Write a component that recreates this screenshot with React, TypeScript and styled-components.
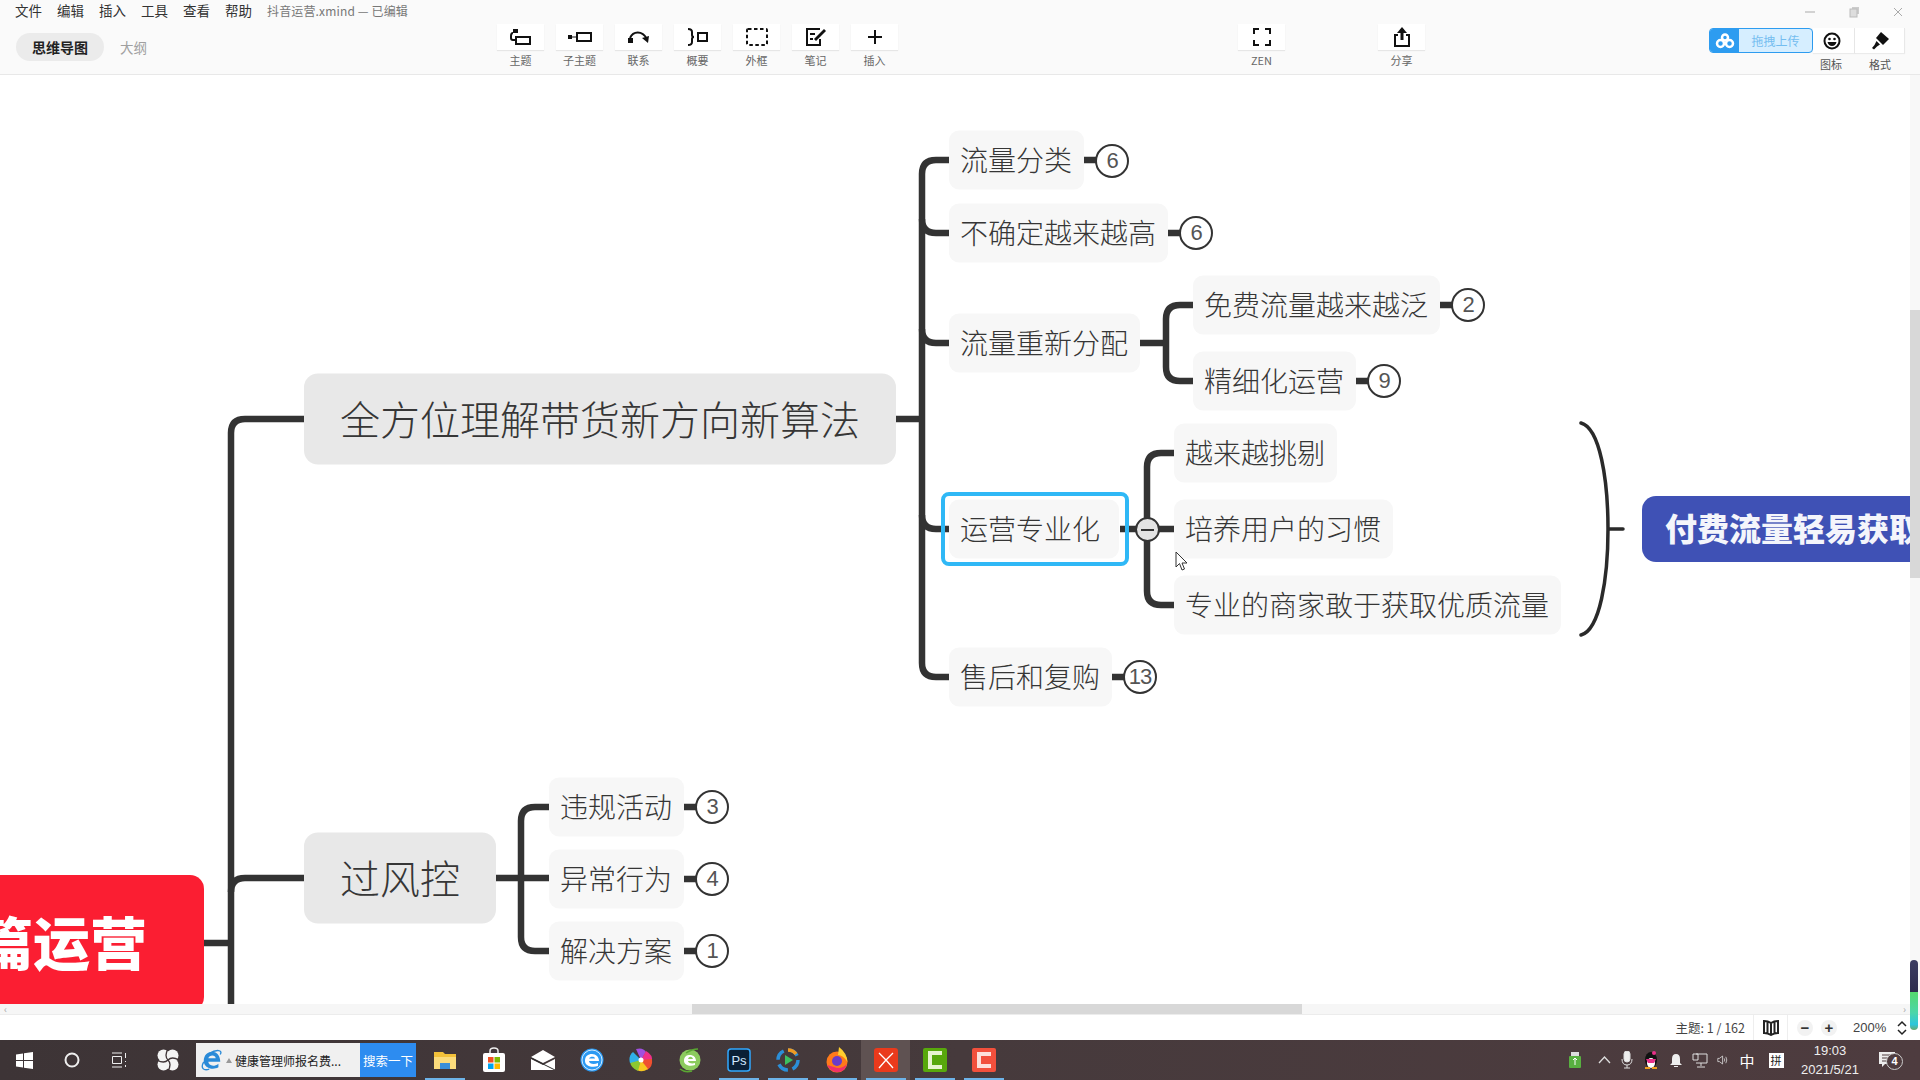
import React from "react";
import styled, { createGlobalStyle } from "styled-components";

const GlobalStyle = createGlobalStyle`
    html, body {
        margin: 0;
        padding: 0;
        background: #fff;
        overflow: hidden;
        font-family: "Noto Sans CJK SC", "Liberation Sans", sans-serif;
    }
    * {
        box-sizing: border-box;
    }
`;

const Page = styled.div`
    width: 1920px;
    height: 1080px;
    display: flex;
    flex-direction: column;
    overflow: hidden;
`;

/* top bar */
const TopBar = styled.header`
    height: 75px;
    flex: none;
    display: flex;
    background: #fafafa;
    border-bottom: 1px solid #e8e8e8;
`;

const LeftPane = styled.div`
    width: 497px;
    flex: none;
    display: flex;
    flex-direction: column;
`;

const MenuRow = styled.div`
    height: 20px;
    padding-left: 15px;
    display: flex;
    align-items: center;
    gap: 15px;
`;

const MenuItem = styled.span`
    font-size: 13.5px;
    color: #333;
    line-height: 20px;
`;

const FileTitle = styled.span`
    font-size: 12px;
    color: #777;
    letter-spacing: 0.15px;
    white-space: nowrap;
`;

const TabRow = styled.div`
    margin-top: 13px;
    padding-left: 16px;
    display: flex;
    align-items: center;
`;

const ActiveTab = styled.div`
    width: 88px;
    height: 28px;
    border-radius: 14px;
    background: #ebebeb;
    color: #222;
    font-size: 14px;
    font-weight: 700;
    display: flex;
    align-items: center;
    justify-content: center;
`;

const Tab = styled.div`
    margin-left: 16px;
    font-size: 13.5px;
    color: #a0a0a0;
`;

const Tools = styled.div`
    display: flex;
    gap: 12px;
    padding-top: 24px;
`;

const ToolWrap = styled.div`
    width: 47px;
    display: flex;
    flex-direction: column;
    align-items: center;
`;

const ToolButton = styled.div`
    width: 47px;
    height: 26px;
    background: #fff;
    box-shadow: 0 1px 1px rgba(0, 0, 0, 0.08);
    display: flex;
    align-items: center;
    justify-content: center;
`;

const ToolLabel = styled.span`
    margin-top: 3px;
    font-size: 11px;
    line-height: 14px;
    color: #666;
    white-space: nowrap;
`;

const ZenSlot = styled.div<{ $gap: number }>`
    margin-left: ${(p) => p.$gap}px;
    padding-top: 24px;
`;

const RightPane = styled.div`
    margin-left: auto;
    width: 211px;
    display: flex;
    flex-direction: column;
`;

const WindowRow = styled.div`
    height: 28px;
    padding: 4px 17px 0 96px;
    display: flex;
    justify-content: space-between;
    align-items: flex-start;
`;

const FormatRow = styled.div`
    display: flex;
    height: 25px;
`;

const Upload = styled.div`
    width: 104px;
    height: 25px;
    display: flex;
    border: 1px solid #2d9cf0;
    border-radius: 4px;
    overflow: hidden;
    background: #d6eeff;
`;

const UploadIcon = styled.div`
    width: 29px;
    background: #2d9cf0;
    display: flex;
    align-items: center;
    justify-content: center;
`;

const UploadText = styled.div`
    flex: 1;
    font-size: 12px;
    color: #74bdf0;
    display: flex;
    align-items: center;
    justify-content: center;
`;

const FormatButton = styled.div<{ $w: number; $shift?: number }>`
    width: ${(p) => p.$w}px;
    padding-right: ${(p) => p.$shift ?? 0}px;
    background: #fff;
    border-right: 1px solid #e8e8e8;
    box-shadow: 0 1px 1px rgba(0, 0, 0, 0.06);
    display: flex;
    align-items: center;
    justify-content: center;
`;

const FormatLabels = styled.div`
    display: flex;
    padding-left: 104px;
    margin-top: 4px;
`;

const FormatLabel = styled.span<{ $w: number }>`
    width: ${(p) => p.$w}px;
    text-align: center;
    font-size: 11px;
    line-height: 14px;
    color: #555;
`;

/* canvas */
const Middle = styled.div`
    flex: 1;
    min-height: 0;
    display: flex;
`;

const Canvas = styled.main`
    position: relative;
    flex: 1;
    overflow: hidden;
    background: #fff;
`;

const Lines = styled.svg`
    position: absolute;
    left: 0;
    top: 0;
`;

const Node = styled.div<{ $x: number; $y: number; $kind: "leaf" | "topic"; $extra?: number }>`
    position: absolute;
    left: ${(p) => p.$x}px;
    top: ${(p) => p.$y}px;
    transform: translateY(-50%);
    height: ${(p) => (p.$kind === "topic" ? 91 : 59)}px;
    padding: 0 ${(p) => (p.$kind === "topic" ? 36 : 12 + (p.$extra ?? 0))}px 4px
        ${(p) => (p.$kind === "topic" ? 36 : 11)}px;
    display: flex;
    align-items: center;
    white-space: nowrap;
    color: #363636;
    font-size: ${(p) => (p.$kind === "topic" ? 40 : 28)}px;
    font-weight: 300;
    background: ${(p) => (p.$kind === "topic" ? "#e8e8e8" : "#f7f7f7")};
    border-radius: ${(p) => (p.$kind === "topic" ? 14 : 10)}px;
`;

const Selection = styled.div`
    position: absolute;
    left: 941px;
    top: 417px;
    width: 188px;
    height: 74px;
    border: 4px solid #2fb8f6;
    border-radius: 8px;
`;

const Badge = styled.div<{ $x: number; $y: number }>`
    position: absolute;
    left: ${(p) => p.$x - 17}px;
    top: ${(p) => p.$y - 17}px;
    width: 34px;
    height: 34px;
    border: 2px solid #333;
    border-radius: 50%;
    background: #fff;
    display: flex;
    align-items: center;
    justify-content: center;
    color: #555;
    font-family: "Liberation Sans", sans-serif;
    font-size: 22px;
    letter-spacing: -1px;
`;

const Collapse = styled.div`
    position: absolute;
    left: 1135px;
    top: 442px;
    width: 25px;
    height: 25px;
    border: 2px solid #333;
    border-radius: 50%;
    background: #e3e3e3;
    display: flex;
    align-items: center;
    justify-content: center;
    &::after {
        content: "";
        width: 13px;
        height: 2px;
        background: #333;
    }
`;

const RootNode = styled.div`
    position: absolute;
    left: -40px;
    top: 800px;
    width: 244px;
    height: 136px;
    background: #fb1e32;
    border-radius: 14px;
    color: #fff;
    font-size: 57px;
    font-weight: 900;
    display: flex;
    align-items: center;
    justify-content: flex-end;
    padding: 0 57px 6px 0;
    white-space: nowrap;
`;

const SummaryNode = styled.div`
    position: absolute;
    left: 1642px;
    top: 421px;
    width: 420px;
    height: 66px;
    background: #3f51b5;
    border-radius: 14px;
    color: #f4f5fb;
    font-size: 32px;
    font-weight: 900;
    display: flex;
    align-items: center;
    padding: 0 0 5px 23px;
    white-space: nowrap;
`;

const Cursor = styled.svg`
    position: absolute;
    left: 1175px;
    top: 476px;
`;

const VScroll = styled.div`
    width: 10px;
    flex: none;
    background: #f8f8f8;
    padding-top: 235px;
`;

const VThumb = styled.div`
    height: 268px;
    background: #d8d8d8;
`;

const HScroll = styled.div`
    height: 11px;
    flex: none;
    background: #f6f6f6;
    border-bottom: 1px solid #ececec;
    display: flex;
    align-items: stretch;
    position: relative;
`;

const HArrow = styled.span<{ $right?: boolean }>`
    position: absolute;
    top: 0;
    ${(p) => (p.$right ? "right: 14px;" : "left: 4px;")}
    font-size: 10px;
    line-height: 10px;
    color: #aaa;
`;

const HThumb = styled.div`
    margin-left: 692px;
    width: 610px;
    background: #d8d8d8;
`;

const Meter = styled.div`
    position: absolute;
    left: 1910px;
    top: 960px;
    width: 8px;
    height: 70px;
    border-radius: 4px;
    background: linear-gradient(
        #3d3d63 0,
        #2e2c4e 45%,
        #55d86e 46%,
        #4bd6a8 75%,
        #2cc6dc 92%,
        #6aa96a 100%
    );
`;

/* status bar */
const StatusBar = styled.div`
    height: 25px;
    flex: none;
    display: flex;
    justify-content: flex-end;
    align-items: stretch;
    background: #fff;
`;

const TopicCount = styled.div`
    font-size: 12.5px;
    color: #444;
    padding-right: 8px;
    display: flex;
    align-items: center;
`;

const BookSlot = styled.div`
    width: 35px;
    border-left: 1px solid #eee;
    border-right: 1px solid #eee;
    display: flex;
    align-items: center;
    justify-content: center;
`;

const ZoomGroup = styled.div`
    width: 132px;
    padding: 0 11px 0 9px;
    display: flex;
    align-items: center;
`;

const ZoomButton = styled.div`
    width: 16px;
    height: 16px;
    border-radius: 50%;
    background: #f2f2f2;
    color: #333;
    font-family: "Liberation Sans", sans-serif;
    font-weight: 700;
    font-size: 15px;
    line-height: 15px;
    text-align: center;
    margin-right: 8px;
`;

const ZoomValue = styled.span`
    margin-left: 8px;
    width: 44px;
    font-family: "Liberation Sans", sans-serif;
    font-size: 13px;
    color: #444;
`;

/* taskbar */
const Taskbar = styled.footer`
    height: 40px;
    flex: none;
    display: flex;
    align-items: stretch;
    background: linear-gradient(90deg, #3d3436 0%, #463a3c 50%, #4e3c3f 100%);
`;

const StartSlot = styled.div`
    width: 48px;
    display: flex;
    align-items: center;
    justify-content: center;
`;

const SearchBox = styled.div`
    width: 220px;
    margin: 3px 4px 3px 4px;
    display: flex;
    background: #f0f0f0;
`;

const SearchText = styled.div`
    flex: 1;
    display: flex;
    align-items: center;
    padding-left: 5px;
    gap: 3px;
    font-size: 12px;
    color: #222;
    white-space: nowrap;
`;

const SearchButton = styled.div`
    width: 56px;
    background: #2d8cf0;
    color: #fff;
    font-size: 12.5px;
    display: flex;
    align-items: center;
    justify-content: center;
`;

const AppSlot = styled.div<{ $open?: boolean; $active?: boolean }>`
    position: relative;
    width: 49px;
    display: flex;
    align-items: center;
    justify-content: center;
    background: ${(p) => (p.$active ? "#5f5252" : "transparent")};
    &::after {
        content: "";
        display: ${(p) => (p.$open ? "block" : "none")};
        position: absolute;
        left: 5px;
        right: 4px;
        bottom: 0;
        height: 2px;
        background: #6db3e8;
    }
`;

const Tray = styled.div`
    margin-left: auto;
    padding-right: 19px;
    display: flex;
    align-items: stretch;
`;

const TraySlot = styled.div<{ $w: number }>`
    width: ${(p) => p.$w}px;
    display: flex;
    align-items: center;
    justify-content: center;
    color: #fff;
    font-size: 15px;
    position: relative;
`;

const Clock = styled.div`
    display: flex;
    flex-direction: column;
    align-items: center;
    color: #eee;
    font-family: "Liberation Sans", sans-serif;
    font-size: 13px;
    line-height: 19px;
`;

const Ime = styled.div`
    width: 15px;
    height: 15px;
    background: #fff;
    color: #222;
    font-size: 11px;
    line-height: 15px;
    text-align: center;
`;

const NotifyCount = styled.span`
    position: absolute;
    left: 13px;
    top: 13px;
    width: 17px;
    height: 17px;
    border-radius: 50%;
    border: 1px solid #ccc;
    background: #4e3c3f;
    color: #fff;
    font-family: "Liberation Sans", sans-serif;
    font-weight: 700;
    font-size: 11px;
    line-height: 15px;
    text-align: center;
`;

const black = { fill: "none", stroke: "#111", strokeWidth: 2 };

const toolIcons: Record<string, React.ReactNode> = {
    主题: (
        <svg width="22" height="18" viewBox="0 0 22 18" {...black}>
            <rect x="3" y="1" width="5" height="4" fill="#111" stroke="none" />
            <path d="M3 5Q1 5 1 8V10Q1 12 3 12H5" />
            <rect x="6" y="9" width="14" height="7" />
        </svg>
    ),
    子主题: (
        <svg width="26" height="12" viewBox="0 0 26 12" {...black}>
            <rect x="1" y="4" width="4" height="4" fill="#111" stroke="none" />
            <path d="M5 6H9" strokeWidth="1" />
            <rect x="10" y="2" width="14" height="8" />
        </svg>
    ),
    联系: (
        <svg width="24" height="14" viewBox="0 0 24 14" {...black}>
            <rect x="1" y="8" width="5" height="5" fill="#111" stroke="none" />
            <path d="M3 8C6 1 15 0 20 9" />
            <path d="M15 8L22 6L21 13Z" fill="#111" stroke="none" />
        </svg>
    ),
    概要: (
        <svg width="22" height="18" viewBox="0 0 22 18" {...black}>
            <path d="M1 1Q5 1 5 4V7Q5 9 7 9Q5 9 5 11V14Q5 17 1 17" />
            <rect x="11" y="5" width="9" height="8" />
        </svg>
    ),
    外框: (
        <svg width="22" height="20" viewBox="0 0 22 20" {...black}>
            <rect x="1" y="2" width="20" height="16" rx="1" strokeDasharray="3.5 2.5" />
        </svg>
    ),
    笔记: (
        <svg width="22" height="20" viewBox="0 0 22 20" {...black}>
            <path d="M15 2H2V18H15V12" />
            <path d="M5 7H10M5 12H8" />
            <path d="M9 12L19 2L21 4L11 14Z" fill="#111" stroke="none" />
        </svg>
    ),
    插入: (
        <svg width="16" height="16" viewBox="0 0 16 16" {...black}>
            <path d="M8 1V15M1 8H15" />
        </svg>
    ),
};

const leaves = [
    { text: "流量分类", x: 949, y: 160 },
    { text: "不确定越来越高", x: 949, y: 233 },
    { text: "流量重新分配", x: 949, y: 343 },
    { text: "运营专业化", x: 949, y: 529, extra: 7 },
    { text: "售后和复购", x: 949, y: 677 },
    { text: "免费流量越来越泛", x: 1193, y: 305 },
    { text: "精细化运营", x: 1193, y: 381 },
    { text: "越来越挑剔", x: 1174, y: 453 },
    { text: "培养用户的习惯", x: 1174, y: 529 },
    { text: "专业的商家敢于获取优质流量", x: 1174, y: 605 },
    { text: "违规活动", x: 549, y: 807 },
    { text: "异常行为", x: 549, y: 879 },
    { text: "解决方案", x: 549, y: 951 },
];

const badges = [
    { n: 6, x: 1112, y: 161 },
    { n: 6, x: 1196, y: 233 },
    { n: 2, x: 1468, y: 305 },
    { n: 9, x: 1384, y: 381 },
    { n: 13, x: 1140, y: 677 },
    { n: 3, x: 712, y: 807 },
    { n: 4, x: 712, y: 879 },
    { n: 1, x: 712, y: 951 },
];

const branchPaths = [
    "M204 943H231",
    "M304 419H245Q231 419 231 433V1010",
    "M304 878H245Q231 878 231 892",
    "M896 419H922",
    "M949 160H936Q922 160 922 174V663Q922 677 936 677H949",
    "M922 219Q922 233 936 233H949",
    "M922 329Q922 343 936 343H949",
    "M922 515Q922 529 936 529H949",
    "M1084 160H1098M1167 233H1182M1439 305H1454M1355 381H1370M1111 677H1126",
    "M1140 343H1166",
    "M1193 305H1180Q1166 305 1166 319V367Q1166 381 1180 381H1193",
    "M1120 529H1174",
    "M1174 453H1161Q1147 453 1147 467V591Q1147 605 1161 605H1174",
    "M496 878H549",
    "M549 807H535Q521 807 521 821V937Q521 951 535 951H549",
    "M683 807H697M683 879H697M683 951H697",
];

const IeLogo = ({ size, color }: { size: number; color: string }) => (
    <svg width={size} height={size} viewBox="0 0 24 24">
        <path
            d="M3 13C3 7 7 3 12 3C18 3 21 8 21 14H8C8 18 14 20 19 16V20C12 24 3 20 3 13ZM8 10H16C16 6 9 6 8 10Z"
            fill={color}
        />
        <path d="M21 6C24 1 17 0 9 5M3 14C-1 21 3 24 9 22" fill="none" stroke={color} strokeWidth="1.500" />
    </svg>
);

const taskApps: React.ReactNode[] = [
    <svg width="24" height="22" viewBox="0 0 24 22" key="folder">
        <path d="M1 3H10L12 5H23V20H1Z" fill="#f3c13a" />
        <rect x="1" y="8" width="22" height="12" fill="#fbdc7c" />
        <rect x="7" y="14" width="10" height="6" fill="#3a8fd8" />
    </svg>,
    <svg width="24" height="26" viewBox="0 0 24 26" key="store">
        <path d="M8 7V4Q8 1 12 1Q16 1 16 4V7" fill="none" stroke="#eee" strokeWidth="1.5" />
        <rect x="1" y="6" width="22" height="19" rx="2" fill="#fff" />
        <rect x="6" y="10" width="5.500" height="5.500" fill="#f25022" />
        <rect x="12.500" y="10" width="5.500" height="5.500" fill="#7fba00" />
        <rect x="6" y="16.500" width="5.500" height="5.500" fill="#00a4ef" />
        <rect x="12.500" y="16.500" width="5.500" height="5.500" fill="#ffb900" />
    </svg>,
    <svg width="24" height="20" viewBox="0 0 24 20" key="mail">
        <path d="M12 0L24 7L12 13L0 7Z" fill="#fff" />
        <path d="M0 9L12 15L24 9V20H0Z" fill="#fff" />
        <path d="M0 8L24 20" stroke="#2b2b2b" strokeWidth="1" />
    </svg>,
    <svg width="24" height="24" viewBox="0 0 24 24" key="edge">
        <circle cx="12" cy="12" r="11.500" fill="#2b9af3" />
        <circle cx="12" cy="12" r="10" fill="none" stroke="#fff" strokeWidth="0.800" />
        <path d="M5 13C5 8 8 6 12 6C16 6 19 9 19 13H9C9 16 14 17 18 15V18C12 20 5 18 5 13ZM9 10.500H15C15 8 10 8 9 10.500Z" fill="#fff" />
    </svg>,
    <svg width="24" height="24" viewBox="0 0 24 24" key="pinwheel">
        <path d="M12 12L7 1Q14 -1 17 4Z" fill="#a050e0" />
        <path d="M12 12L17 3Q24 7 23 13Z" fill="#f0308a" />
        <path d="M12 12L23 11Q24 19 18 22Z" fill="#f05030" />
        <path d="M12 12L19 21Q13 25 8 22Z" fill="#f8c820" />
        <path d="M12 12L9 23Q2 20 1 14Z" fill="#8cc830" />
        <path d="M12 12L1 15Q-1 8 4 4Z" fill="#30b0e8" />
        <circle cx="12" cy="12" r="2.500" fill="#fff" />
    </svg>,
    <svg width="24" height="26" viewBox="0 0 24 26" key="ie360">
        <circle cx="12" cy="13" r="10.500" fill="#8ccb5e" />
        <path d="M6 14C6 9 9 8 12 8C15 8 18 10 18 14H10C10 16 14 17 17 16V18C12 20 6 18 6 14ZM10 12H15C14 9 11 9 10 12Z" fill="#fff" />
        <path d="M20 2Q14 2 8 6M2 22Q7 26 14 24" fill="none" stroke="#5aa832" strokeWidth="1.500" />
    </svg>,
    <svg width="24" height="24" viewBox="0 0 24 24" key="ps">
        <rect x="1" y="1" width="22" height="22" rx="3" fill="#0a2036" stroke="#31a8ff" strokeWidth="1.500" />
        <text x="12" y="17" fontSize="13" fontFamily="Liberation Sans" fill="#cfe9ff" textAnchor="middle">Ps</text>
    </svg>,
    <svg width="24" height="24" viewBox="0 0 24 24" key="player">
        <circle cx="12" cy="12" r="10" fill="none" stroke="#2b8fd8" strokeWidth="3.500" strokeDasharray="11 4.700" />
        <path d="M12 2A10 10 0 0 1 20 6" fill="none" stroke="#f09a20" strokeWidth="3.500" />
        <path d="M9 7L17 12L9 17Z" fill="#3cc060" />
    </svg>,
    <svg width="24" height="26" viewBox="0 0 24 26" key="firefox">
        <circle cx="12" cy="15" r="10.500" fill="#ff7a1a" />
        <path d="M14 0Q22 6 22.500 15Q18 8 13 8Z" fill="#ffcf2f" />
        <path d="M2 18Q6 26 14 25Q20 24 22 17Q16 23 9 20Z" fill="#f0306a" />
        <circle cx="12" cy="14" r="5" fill="#6a3cc8" />
    </svg>,
    <svg width="24" height="24" viewBox="0 0 24 24" key="xmind">
        <rect width="24" height="24" rx="3" fill="#ea3a1c" />
        <path d="M5 5L12 12L19 5M12 12L5 20M12 12L19 20" fill="none" stroke="#fff" strokeWidth="1.300" />
    </svg>,
    <svg width="24" height="24" viewBox="0 0 24 24" key="camtasia">
        <rect width="24" height="24" rx="2" fill="#58a80c" />
        <path d="M19 5H7V19H19" fill="none" stroke="#e8f4d0" strokeWidth="4" />
    </svg>,
    <svg width="24" height="24" viewBox="0 0 24 24" key="snagit">
        <rect width="24" height="24" rx="2" fill="#f2503c" />
        <path d="M19 6H7V18H19" fill="none" stroke="#fde0da" strokeWidth="4" />
    </svg>,
];

const App = () => {
    return (
        <Page>
            <GlobalStyle />
            <TopBar>
                <LeftPane>
                    <MenuRow>
                        {["文件", "编辑", "插入", "工具", "查看", "帮助"].map((m) => (
                            <MenuItem key={m}>{m}</MenuItem>
                        ))}
                        <FileTitle>抖音运营.xmind — 已编辑</FileTitle>
                    </MenuRow>
                    <TabRow>
                        <ActiveTab>思维导图</ActiveTab>
                        <Tab>大纲</Tab>
                    </TabRow>
                </LeftPane>
                <Tools>
                    {Object.keys(toolIcons).map((name) => (
                        <ToolWrap key={name}>
                            <ToolButton>{toolIcons[name]}</ToolButton>
                            <ToolLabel>{name}</ToolLabel>
                        </ToolWrap>
                    ))}
                </Tools>
                <ZenSlot $gap={340}>
                    <ToolWrap>
                        <ToolButton>
                            <svg width="18" height="18" viewBox="0 0 18 18" {...black}>
                                <path d="M1 6V1H6M12 1H17V6M17 12V17H12M6 17H1V12" />
                            </svg>
                        </ToolButton>
                        <ToolLabel>ZEN</ToolLabel>
                    </ToolWrap>
                </ZenSlot>
                <ZenSlot $gap={93}>
                    <ToolWrap>
                        <ToolButton>
                            <svg width="18" height="20" viewBox="0 0 18 20" {...black}>
                                <path d="M5 8H2V19H16V8H13" />
                                <path d="M9 13V2" strokeWidth="3" />
                                <path d="M4 6L9 0L14 6Z" fill="#111" stroke="none" />
                            </svg>
                        </ToolButton>
                        <ToolLabel>分享</ToolLabel>
                    </ToolWrap>
                </ZenSlot>
                <RightPane>
                    <WindowRow>
                        <svg width="10" height="16" viewBox="0 0 10 16">
                            <path d="M0 8H10" stroke="#aaa" />
                        </svg>
                        <svg width="11" height="16" viewBox="0 0 11 16">
                            <path d="M3 3H10V10H8V5H3Z" fill="#ccc" />
                            <rect x="1" y="5" width="7" height="8" fill="#ddd" stroke="#bbb" />
                        </svg>
                        <svg width="10" height="16" viewBox="0 0 10 16">
                            <path d="M1 4L9 12M9 4L1 12" stroke="#aaa" />
                        </svg>
                    </WindowRow>
                    <FormatRow>
                        <Upload>
                            <UploadIcon>
                                <svg width="20" height="16" viewBox="0 0 20 16" fill="none" stroke="#fff" strokeWidth="2.500">
                                    <circle cx="5.500" cy="10.500" r="3.500" />
                                    <circle cx="14.500" cy="10.500" r="3.500" />
                                    <circle cx="10" cy="4.500" r="3" />
                                </svg>
                            </UploadIcon>
                            <UploadText>拖拽上传</UploadText>
                        </Upload>
                        <FormatButton $w={42} $shift={4}>
                            <svg width="18" height="18" viewBox="0 0 18 18">
                                <circle cx="9" cy="9" r="7.500" fill="#fff" stroke="#111" strokeWidth="2" />
                                <circle cx="6.500" cy="7" r="1.300" fill="#111" />
                                <circle cx="11.500" cy="7" r="1.300" fill="#111" />
                                <path d="M4.500 10H13.500Q12.500 14 9 14Q5.500 14 4.500 10Z" fill="#111" />
                            </svg>
                        </FormatButton>
                        <FormatButton $w={50}>
                            <svg width="18" height="18" viewBox="0 0 18 18" fill="#111">
                                <path d="M10 0L18 7L12 13L5 6Z" />
                                <path d="M5.500 9L9 12.500L6 14.500L3 17.500L1 16L3.500 13Z" />
                            </svg>
                        </FormatButton>
                    </FormatRow>
                    <FormatLabels>
                        <FormatLabel $w={36}>图标</FormatLabel>
                        <FormatLabel $w={62}>格式</FormatLabel>
                    </FormatLabels>
                </RightPane>
            </TopBar>

            <Middle>
                <Canvas>
                    <Lines width="1910" height="930" viewBox="0 75 1910 930" fill="none">
                        {branchPaths.map((d) => (
                            <path key={d} d={d} stroke="#333" strokeWidth="6.500" />
                        ))}
                        <path
                            d="M1581 423C1600 428 1608 480 1608 529C1608 578 1600 630 1581 635M1608 529H1623"
                            stroke="#2a2a2a"
                            strokeWidth="3.500"
                            strokeLinecap="round"
                        />
                    </Lines>
                    <Node $kind="topic" $x={304} $y={344}>全方位理解带货新方向新算法</Node>
                    <Node $kind="topic" $x={304} $y={803}>过风控</Node>
                    {leaves.map((l) => (
                        <Node key={l.text} $kind="leaf" $x={l.x} $y={l.y - 75} $extra={l.extra}>
                            {l.text}
                        </Node>
                    ))}
                    {badges.map((b) => (
                        <Badge key={`${b.x}-${b.y}`} $x={b.x} $y={b.y - 75}>
                            {b.n}
                        </Badge>
                    ))}
                    <Selection />
                    <Collapse />
                    <RootNode>篇运营</RootNode>
                    <SummaryNode>付费流量轻易获取</SummaryNode>
                    <Cursor width="13" height="20" viewBox="0 0 13 20">
                        <path d="M1 1V16L4.500 12.500L7 19L9.500 18L7 12H12Z" fill="#fff" stroke="#333" />
                    </Cursor>
                </Canvas>
                <VScroll>
                    <VThumb />
                </VScroll>
            </Middle>

            <HScroll>
                <HArrow>‹</HArrow>
                <HThumb />
                <HArrow $right>›</HArrow>
            </HScroll>

            <StatusBar>
                <TopicCount>主题: 1 / 162</TopicCount>
                <BookSlot>
                    <svg width="18" height="16" viewBox="0 0 18 16" fill="none" stroke="#222" strokeWidth="2">
                        <path d="M9 3Q6 1 2 1V13Q6 13 9 15Q12 13 16 13V1Q12 1 9 3ZM9 3V15M5.500 1.500V13M12.500 1.500V13" />
                    </svg>
                </BookSlot>
                <ZoomGroup>
                    <ZoomButton>−</ZoomButton>
                    <ZoomButton>+</ZoomButton>
                    <ZoomValue>200%</ZoomValue>
                    <svg width="10" height="16" viewBox="0 0 10 16" fill="none" stroke="#222" strokeWidth="1.500">
                        <path d="M1 6L5 2L9 6M1 10L5 14L9 10" />
                    </svg>
                </ZoomGroup>
            </StatusBar>
            <Meter />

            <Taskbar>
                <StartSlot>
                    <svg width="17" height="17" viewBox="0 0 17 17" fill="#fff">
                        <path d="M0 2.500L7 1.500V8H0ZM8 1.300L17 0V8H8ZM0 9H7V15.500L0 14.500ZM8 9H17V17L8 15.700Z" />
                    </svg>
                </StartSlot>
                <StartSlot>
                    <svg width="16" height="16" viewBox="0 0 16 16">
                        <circle cx="8" cy="8" r="6.500" fill="none" stroke="#eee" strokeWidth="2" />
                    </svg>
                </StartSlot>
                <StartSlot>
                    <svg width="18" height="16" viewBox="0 0 18 16" fill="none" stroke="#eee">
                        <path d="M1 1H11M1 15H11M1.500 4.500H10.500V11.500H1.500ZM14.500 1V6M14.500 9V10M14.500 13V15" />
                    </svg>
                </StartSlot>
                <StartSlot>
                    <svg width="22" height="22" viewBox="0 0 22 22">
                        <circle cx="6.500" cy="6.500" r="6" fill="#f4f4f4" />
                        <circle cx="15.500" cy="6.500" r="6" fill="#f4f4f4" />
                        <circle cx="15.500" cy="15.500" r="6" fill="#f4f4f4" />
                        <circle cx="6.500" cy="15.500" r="6" fill="#f4f4f4" />
                        <path d="M11 11Q7 7 11 0M11 11Q15 7 22 11M11 11Q15 15 11 22M11 11Q7 15 0 11" fill="none" stroke="#3f3537" strokeWidth="1.300" />
                    </svg>
                </StartSlot>
                <SearchBox>
                    <SearchText>
                        <IeLogo size={22} color="#2a8ad8" />
                        <svg width="6" height="5" viewBox="0 0 6 5">
                            <path d="M3 0L6 5H0Z" fill="#999" />
                        </svg>
                        <span>健康管理师报名费...</span>
                    </SearchText>
                    <SearchButton>搜索一下</SearchButton>
                </SearchBox>
                {taskApps.map((icon, i) => (
                    <AppSlot key={i} $open={i === 0 || i >= 6} $active={i === 9}>
                        {icon}
                    </AppSlot>
                ))}
                <Tray>
                    <TraySlot $w={24}>
                        <svg width="12" height="16" viewBox="0 0 12 16">
                            <rect x="2" y="0" width="8" height="4" fill="#ddd" />
                            <rect x="0" y="4" width="12" height="12" rx="1" fill="#58b040" />
                            <path d="M6 6V13M4 8L6 6L8 8" stroke="#fff" fill="none" />
                        </svg>
                    </TraySlot>
                    <TraySlot $w={34}>
                        <svg width="13" height="8" viewBox="0 0 13 8" fill="none" stroke="#ddd" strokeWidth="1.300">
                            <path d="M1 7L6.500 1L12 7" />
                        </svg>
                    </TraySlot>
                    <TraySlot $w={12}>
                        <svg width="12" height="18" viewBox="0 0 12 18" fill="none" stroke="#ddd">
                            <rect x="3" y="0" width="6" height="11" rx="3" fill="#eee" />
                            <path d="M1 8Q1 14 6 14Q11 14 11 8M6 14V17M3 17H9" />
                        </svg>
                    </TraySlot>
                    <TraySlot $w={36}>
                        <svg width="16" height="18" viewBox="0 0 16 18">
                            <ellipse cx="8" cy="9" rx="6" ry="8" fill="#111" />
                            <ellipse cx="8" cy="12" rx="4" ry="5" fill="#fff" />
                            <path d="M3 8H13L11 12H5Z" fill="#e8308a" />
                            <circle cx="11" cy="2" r="2" fill="#e8308a" />
                            <path d="M2 17H7M9 17H14" stroke="#f0a020" strokeWidth="2" />
                        </svg>
                    </TraySlot>
                    <TraySlot $w={14}>
                        <svg width="14" height="15" viewBox="0 0 14 15" fill="#eee">
                            <path d="M7 1Q11 1 11 6V10L13 12H1L3 10V6Q3 1 7 1ZM5 13H9V14H5Z" />
                        </svg>
                    </TraySlot>
                    <TraySlot $w={34}>
                        <svg width="16" height="15" viewBox="0 0 16 15" fill="none" stroke="#ddd">
                            <path d="M4 1H15V10H4M1 1H6V7H1ZM9 10V13M5 14H13" />
                        </svg>
                    </TraySlot>
                    <TraySlot $w={12}>
                        <svg width="15" height="14" viewBox="0 0 15 14" fill="none" stroke="#ddd">
                            <path d="M1 5H3L7 2V12L3 9H1ZM9 5Q10.500 7 9 9M11 3Q13.500 7 11 11" />
                        </svg>
                    </TraySlot>
                    <TraySlot $w={36}>中</TraySlot>
                    <TraySlot $w={22}>
                        <Ime>拼</Ime>
                    </TraySlot>
                    <TraySlot $w={86}>
                        <Clock>
                            <span>19:03</span>
                            <span>2021/5/21</span>
                        </Clock>
                    </TraySlot>
                    <TraySlot $w={28}>
                        <svg width="16" height="16" viewBox="0 0 16 16">
                            <path d="M0 0H16V12H6L3 15V12H0Z" fill="#eee" />
                            <path d="M3 3H13M3 6H13M3 9H10" stroke="#4e3c3f" />
                        </svg>
                        <NotifyCount>4</NotifyCount>
                    </TraySlot>
                </Tray>
            </Taskbar>
        </Page>
    );
};

export default App;
